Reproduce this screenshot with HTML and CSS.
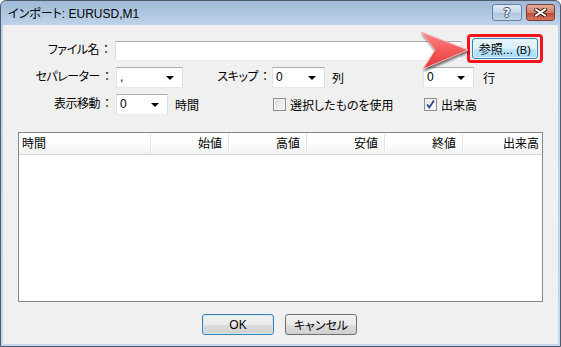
FILE: index.html
```html
<!DOCTYPE html>
<html lang="ja">
<head>
    <meta charset="UTF-8">
    <title>インポート: EURUSD,M1</title>
    <link rel="stylesheet" href="styles.css">
</head>
<body>
    <div class="window">
        <div class="titlebar">
            <span class="title">インポート: EURUSD,M1</span>
            <button class="tb-btn help">?</button>
            <button class="tb-btn close">
                <svg width="13" height="9" viewBox="0 0 13 9">
                    <path d="M2 1.5 L11 7.5 M11 1.5 L2 7.5" stroke="#3a1a14" stroke-width="4" stroke-linecap="square"/>
                    <path d="M2 1.5 L11 7.5 M11 1.5 L2 7.5" stroke="#fff" stroke-width="2" stroke-linecap="square"/>
                </svg>
            </button>
        </div>

        <div class="content">
            <div class="file-row">
                <label class="lbl">ファイル名<b>：</b></label>
                <input type="text" class="file-input">
                <div class="highlight">
                    <button class="btn browse">参照... <small>(B)</small></button>
                </div>
            </div>

            <div class="opts">
                <label class="lbl">セパレーター<b>：</b></label>
                <div class="cell"><div class="combo w67"><span>,</span><i class="caret"></i></div></div>
                <label class="lbl lbl-mid">スキップ<b>：</b></label>
                <div class="cell"><div class="combo w53"><span>0</span><i class="caret"></i></div><span class="unit">列</span></div>
                <div class="cell"><div class="combo w51"><span>0</span><i class="caret"></i></div><span class="unit u9">行</span></div>

                <label class="lbl">表示移動<b>：</b></label>
                <div class="cell span2"><div class="combo w52"><span>0</span><i class="caret"></i></div><span class="unit">時間</span></div>
                <div class="cell"><span class="check"></span><span class="check-text">選択したものを使用</span></div>
                <div class="cell"><span class="check on">
                    <svg width="11" height="11" viewBox="0 0 11 11"><path d="M2 5.5 L4.3 8.5 L9 1.5" fill="none" stroke="#2a4a8a" stroke-width="1.8"/></svg>
                </span><span class="check-text">出来高</span></div>
            </div>

            <div class="grid">
                <div class="grid-head">
                    <div class="col c-time">時間</div>
                    <div class="col">始値</div>
                    <div class="col">高値</div>
                    <div class="col">安値</div>
                    <div class="col">終値</div>
                    <div class="col c-last">出来高</div>
                </div>
            </div>

            <div class="actions">
                <button class="btn default">OK</button>
                <button class="btn">キャンセル</button>
            </div>
        </div>

        <svg class="pointer" width="62" height="48" viewBox="0 0 62 48">
            <defs>
                <linearGradient id="arrowFill" x1="0" y1="0" x2="0" y2="1">
                    <stop offset="0" stop-color="#ff8a8a"/>
                    <stop offset="0.5" stop-color="#f45a5a"/>
                    <stop offset="1" stop-color="#e03a3a"/>
                </linearGradient>
            </defs>
            <polygon points="7,3 54,21 9,40 21,21" fill="url(#arrowFill)" stroke="#ffb3b3" stroke-width="1"/>
        </svg>
    </div>
</body>
</html>
```

FILE: styles.css
```css
body {
    margin: 0;
    background: #fff;
    font-family: "Liberation Sans", "Noto Sans CJK JP", sans-serif;
    font-size: 12px;
    color: #000;
}
.window {
    position: relative;
    width: 561px;
    height: 347px;
    box-sizing: border-box;
    border: 1px solid #4d5b6d;
    border-radius: 6px 6px 0 0;
    padding: 0 2px 2px;
    background: linear-gradient(#9fb9d7, #bed3ea 24px, #c3d8ee);
    display: flex;
    flex-direction: column;
    font-feature-settings: "palt";
}
.titlebar {
    height: 24px;
    display: flex;
    align-items: flex-start;
    padding: 3px 3px 0 5px;
    box-sizing: border-box;
}
.title {
    flex: 1;
    line-height: 17px;
    margin-top: 2px;
    font-size: 12px;
    color: #000;
}
.tb-btn {
    width: 30px;
    height: 17px;
    padding: 0;
    border-radius: 3px;
    display: flex;
    align-items: center;
    justify-content: center;
}
.help {
    border: 1px solid #6a7f9c;
    background: linear-gradient(#e2ebf5, #c6d6e9 50%, #aec4de 51%, #c3d5ea);
    color: #fff;
    font-family: "DejaVu Sans", sans-serif;
    font-weight: bold;
    font-size: 12px;
    text-shadow: 1px 0 0 #3b4a60, -1px 0 0 #3b4a60, 0 1px 0 #3b4a60, 0 -1px 0 #3b4a60;
}
.close {
    width: 29px;
    margin-left: 4px;
    border: 1px solid #7c3b30;
    background: linear-gradient(#e6aa9c, #d47a67 50%, #c04a35 51%, #d4745d);
}
.content {
    flex: 1;
    background: #f0f0f0;
    padding: 9px 15px 0;
    display: flex;
    flex-direction: column;
}
.lbl {
    text-align: right;
    padding-right: 6px;
    line-height: 21px;
    white-space: nowrap;
    letter-spacing: -0.5px;
}
.lbl b {
    font-weight: normal;
    margin-left: 4px;
    letter-spacing: 0;
}
.file-row {
    display: flex;
    align-items: flex-start;
    margin-left: -15px;
}
.file-row .lbl {
    width: 107px;
    margin-top: 6px;
}
.file-input {
    width: 350px;
    height: 20px;
    box-sizing: border-box;
    margin: 7px 0 0;
    border: 1px solid #abadb3;
    border-color: #abadb3 #dbdfe6 #e3e9ef #e2e3ea;
    background: #fff;
}
.highlight {
    margin-left: 5px;
    width: 77px;
    height: 29px;
    box-sizing: border-box;
    border: 3px solid #f2141a;
    border-radius: 4px;
    display: flex;
    align-items: center;
    justify-content: center;
}
.btn {
    height: 21px;
    width: 72px;
    padding: 0;
    border: 1px solid #707070;
    border-radius: 3px;
    background: linear-gradient(#f2f2f2, #ebebeb 50%, #dddddd 51%, #cfcfcf);
    font-family: "Liberation Sans", "Noto Sans CJK JP", sans-serif;
    font-size: 12px;
    color: #000;
    font-feature-settings: "palt";
}
.browse {
    width: 66px;
    border-color: #3c7fb1;
    background: linear-gradient(#eaf6fd, #d9f0fc 50%, #bee6fd 51%, #a7d9f5);
    box-shadow: inset 0 0 0 1px #e4f4fc;
}
.browse small {
    font-size: 11px;
}
.opts {
    display: grid;
    grid-template-columns: 113px 67px 89px 151px auto;
    grid-auto-rows: 21px;
    row-gap: 6px;
    margin: 4px 0 0 -15px;
}
.opts .lbl {
    padding-right: 6px;
}
.opts .lbl-mid {
    padding-right: 4px;
}
.cell {
    display: flex;
    align-items: center;
}
.span2 {
    grid-column: span 2;
}
.combo {
    height: 21px;
    box-sizing: border-box;
    border: 1px solid #abadb3;
    border-color: #abadb3 #dbdfe6 #e3e9ef #e2e3ea;
    background: #fff;
    display: flex;
    align-items: center;
    padding: 0 8px 0 3px;
}
.combo span {
    flex: 1;
    line-height: 19px;
}
.w67 { width: 67px; }
.w53 { width: 53px; }
.w51 { width: 51px; }
.w52 { width: 52px; }
.caret {
    width: 0;
    height: 0;
    border-left: 4px solid transparent;
    border-right: 4px solid transparent;
    border-top: 4px solid #000;
}
.unit {
    margin-left: 7px;
}
.u9 {
    margin-left: 9px;
}
.check {
    width: 13px;
    height: 13px;
    box-sizing: border-box;
    margin-left: 1px;
    border: 1px solid #8f8f8f;
    background: linear-gradient(135deg, #dcdcdc, #f8f8f8);
    box-shadow: inset 0 0 0 1px #f4f4f4;
    display: flex;
    align-items: center;
    justify-content: center;
}
.check.on {
    background: linear-gradient(135deg, #e6e6e6, #fdfdfd);
}
.check-text {
    margin-left: 4px;
}
.grid {
    margin-top: 17px;
    height: 170px;
    box-sizing: border-box;
    border: 1px solid #828790;
    background: #fff;
}
.grid-head {
    display: flex;
    height: 22px;
    box-sizing: border-box;
    border-bottom: 1px solid #d5d5d5;
    background: linear-gradient(#fff, #fff 40%, #f1f2f4);
}
.col {
    width: 78px;
    box-sizing: border-box;
    text-align: right;
    padding: 0 6px;
    line-height: 22px;
    border-left: 1px solid #e3e5e8;
    box-shadow: inset 1px 0 0 #fff;
}
.c-time {
    width: 131px;
    text-align: left;
    padding-left: 3px;
    border-left: 0;
    box-shadow: none;
}
.c-last {
    flex: 1;
    padding-right: 3px;
}
.actions {
    display: flex;
    justify-content: center;
    gap: 11px;
    margin-top: 12px;
    padding-right: 2px;
}
.actions .default {
    border-color: #3c7fb1;
    box-shadow: inset 0 0 0 1px #cfe8f8;
}
.pointer {
    position: absolute;
    left: 413px;
    top: 28px;
    filter: drop-shadow(1px 2px 1px rgba(0, 0, 0, 0.55));
}
```
